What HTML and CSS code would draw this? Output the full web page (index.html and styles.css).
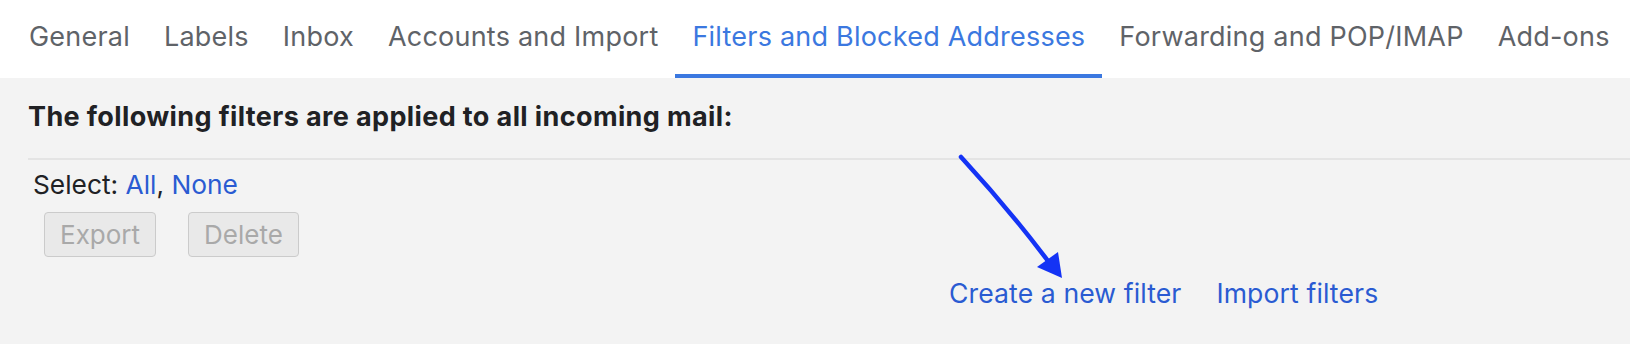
FILE: index.html
```html
<!DOCTYPE html>
<html lang="en">

<head>
    <meta charset="UTF-8">
    <meta name="viewport" content="width=device-width, initial-scale=1.0">
    <title>Settings - Filters</title>
    <link rel="stylesheet" href="styles.css">
</head>

<body>
    <!-- Tabs -->
    <div class="tabs">
        <div class="tab">General</div>
        <div class="tab">Labels</div>
        <div class="tab">Inbox</div>
        <div class="tab">Accounts and Import</div>
        <div class="tab active">Filters and Blocked Addresses</div>
        <div class="tab">Forwarding and POP/IMAP</div>
        <div class="tab">Add-ons</div>
    </div>

    <div class="panel">
        <h2 class="title">The following filters are applied to all incoming mail:</h2>
        <div class="divider"></div>
        <div class="select">Select: <a href="#">All</a>, <a href="#">None</a></div>
        <div class="buttons">
            <button disabled>Export</button>
            <button disabled>Delete</button>
        </div>
        <div class="links">
            <a href="#">Create a new filter</a>
            <a href="#">Import filters</a>
        </div>
    </div>

    <!-- annotation arrow -->
    <svg class="arrow" width="1630" height="344" viewBox="0 0 1630 344">
        <path d="M961 157 Q1008 208 1048 261" fill="none" stroke="#1433f5" stroke-width="4.5" stroke-linecap="round"/>
        <polygon points="1062,278 1037,267 1058,252" fill="#1433f5"/>
    </svg>
</body>

</html>
```

FILE: styles.css
```css
body {
    margin: 0;
    background-color: #f3f3f3;
    font-family: Inter, "Liberation Sans", sans-serif;
    position: relative;
    height: 344px;
    overflow: hidden;
}

.tabs {
    display: flex;
    height: 78px;
    padding-left: 12px;
    background-color: #fff;
}

.tab {
    box-sizing: border-box;
    height: 78px;
    padding: 20px 17px 0;
    font-size: 27px;
    line-height: 34px;
    letter-spacing: 0.22px;
    color: #5f6368;
    white-space: nowrap;
}

.tab.active {
    color: #3b78e0;
    border-bottom: 4px solid #3b78e0;
}

.panel {
    padding-left: 28px;
}

.title {
    margin: 0;
    padding-top: 22px;
    font-size: 27px;
    line-height: 34px;
    letter-spacing: 0.38px;
    font-weight: 700;
    color: #202124;
}

.divider {
    height: 2px;
    margin-top: 24px;
    background-color: #e4e4e4;
}

.select {
    margin-top: 8px;
    padding-left: 5px;
    font-size: 26.3px;
    line-height: 34px;
    color: #202124;
}

a {
    color: #2a5bd2;
    text-decoration: none;
}

.buttons {
    display: flex;
    gap: 32px;
    margin-top: 10px;
    padding-left: 16px;
}

.buttons button {
    box-sizing: border-box;
    height: 45px;
    padding: 0 15px;
    font-family: Inter, "Liberation Sans", sans-serif;
    font-size: 26px;
    color: #a9a9a9;
    background-color: #e9e9e9;
    border: 1px solid #cbcbcb;
    border-radius: 4px;
}

.links {
    display: flex;
    gap: 35px;
    margin-top: 19px;
    padding-left: 921px;
    font-size: 26.6px;
    line-height: 34px;
    letter-spacing: 0.1px;
}

.arrow {
    position: absolute;
    left: 0;
    top: 0;
    pointer-events: none;
}
```
